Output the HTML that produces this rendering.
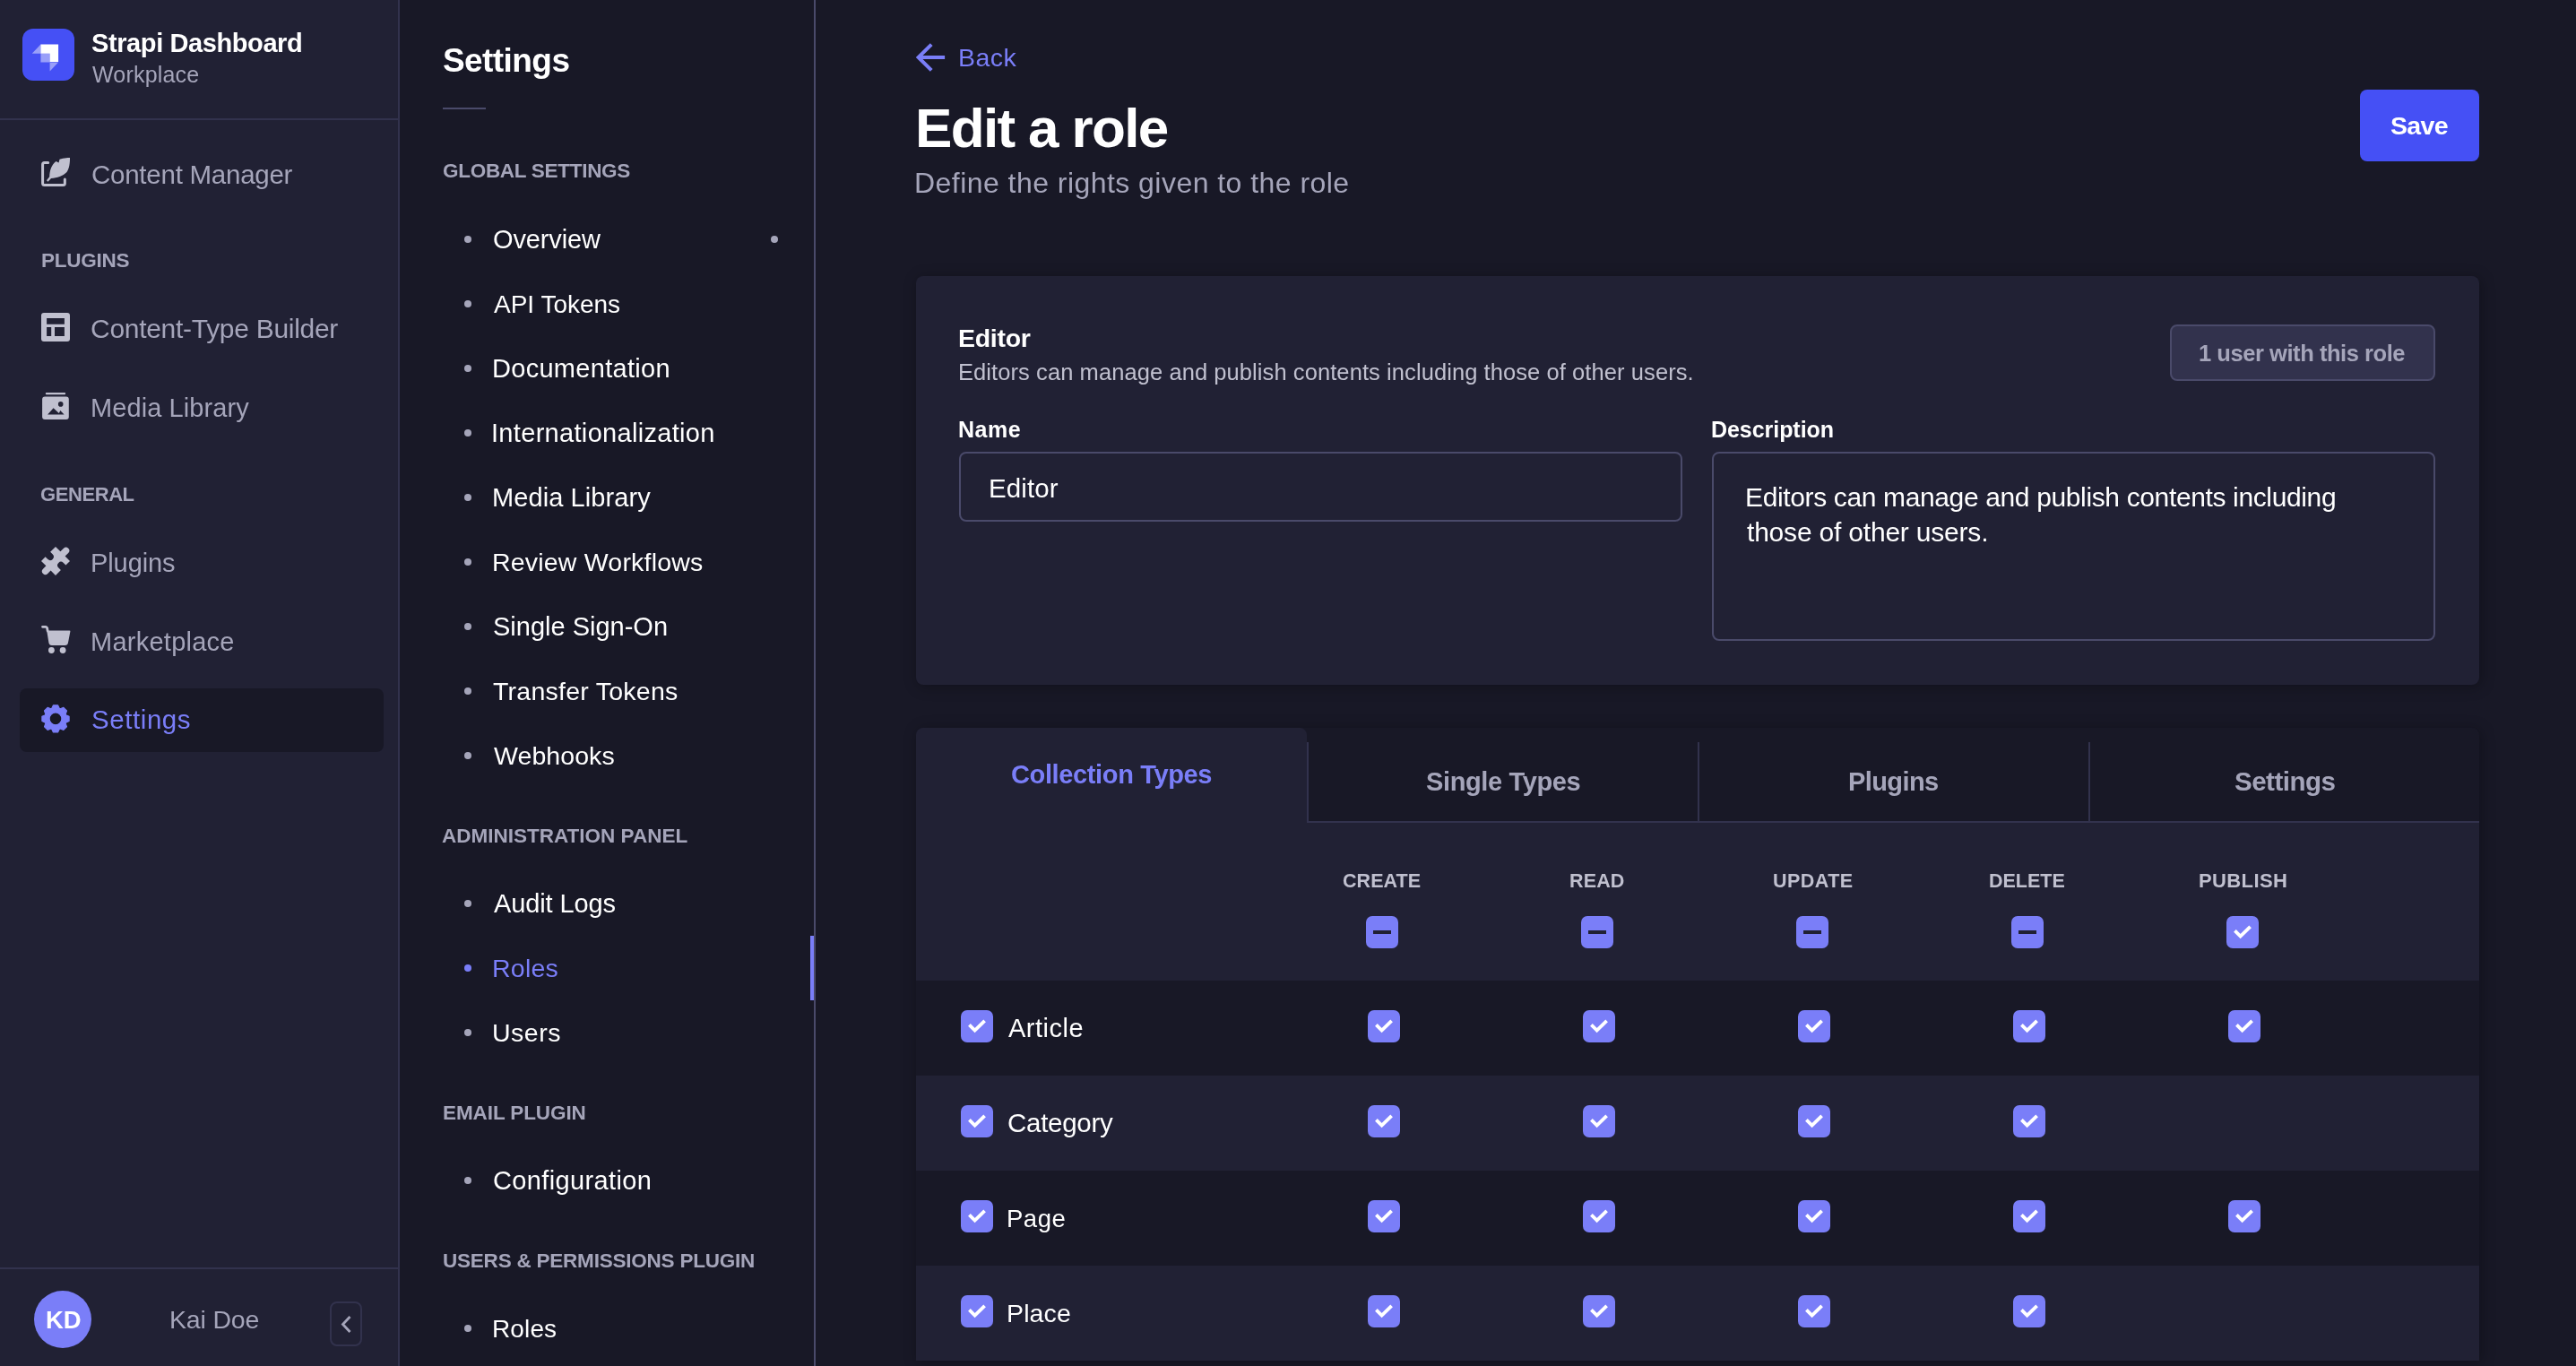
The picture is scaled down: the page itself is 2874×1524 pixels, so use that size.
<!DOCTYPE html>
<html><head><meta charset="utf-8"><title>Edit a role</title>
<style>
html,body{margin:0;padding:0;}
body{width:2874px;height:1524px;overflow:hidden;background:#181826;position:relative;font-family:"Liberation Sans",sans-serif;}
.a{position:absolute;}
@media (max-width:2000px){html{zoom:0.5;}}
.t{position:absolute;white-space:nowrap;font-family:"Liberation Sans",sans-serif;will-change:transform;}
</style></head><body>
<div class="a" style="left:0px;top:0px;width:444px;height:1524px;background:#212134;"></div>
<div class="a" style="left:444px;top:0px;width:2px;height:1524px;background:#32324d;"></div>
<div class="a" style="left:0px;top:132px;width:444px;height:2px;background:#32324d;"></div>
<div class="a" style="left:0px;top:1414px;width:444px;height:2px;background:#32324d;"></div>
<svg class="a" style="left:25px;top:32px" width="58" height="58" viewBox="0 0 58 58">
<rect width="58" height="58" rx="12" fill="#4550f5"/>
<path d="M20.4 17.5H40.1V36.9H30.6V27.7H20.4Z" fill="#fff"/>
<path d="M10.7 27.7L20.4 17.5V27.7Z M20.4 27.7H30.6V37.4H20.4Z M30.6 37.4H40.1L30.6 47.6Z" fill="#fff" fill-opacity="0.45"/>
</svg>
<svg class="a" style="left:38px;top:168px" width="48" height="48" viewBox="0 0 48 48">
<path d="M15.7 13.45H11.6A2 2 0 0 0 9.6 15.45V36.4A2 2 0 0 0 11.6 38.4H32.35A2 2 0 0 0 34.35 36.4V32" fill="none" stroke="#c0c0cf" stroke-width="3" stroke-linecap="round"/>
<path d="M40 8.1C40 8.1 33 8.1 28.5 9.8L27.5 13.6L24.5 12.1C19.5 16 17.5 22 17.2 29.2L14 33.3L15.5 34.8L19 31C26 30.5 32 28.5 36.5 24C40.5 19 40 8.1 40 8.1Z" fill="#c0c0cf"/>
</svg>
<svg class="a" style="left:38px;top:342px" width="48" height="48" viewBox="0 0 48 48">
<path fill-rule="evenodd" fill="#c0c0cf" d="M11 6.9H37A3 3 0 0 1 40 9.9V36A3 3 0 0 1 37 39H11A3 3 0 0 1 8 36V9.9A3 3 0 0 1 11 6.9Z M14.1 13H33.9V19.7H14.1Z M14.1 23H19.2V32.9H14.1Z M23 23H33.9V32.9H23Z"/>
</svg>
<svg class="a" style="left:38px;top:430px" width="48" height="48" viewBox="0 0 48 48">
<rect x="12.8" y="7.9" width="22.3" height="2.3" rx="1" fill="#c0c0cf"/>
<path fill-rule="evenodd" fill="#c0c0cf" d="M12.1 12.6H35.8A3 3 0 0 1 38.8 15.6V34.9A3 3 0 0 1 35.8 37.9H12.1A3 3 0 0 1 9.1 34.9V15.6A3 3 0 0 1 12.1 12.6Z M15.1 32.5L21.6 25.3L27.8 30.9L29.3 28.1L33.6 32.5Z M29.7 20.9m-2.8 0a2.8 2.8 0 1 0 5.6 0a2.8 2.8 0 1 0 -5.6 0Z"/>
</svg>
<svg class="a" style="left:38px;top:602px" width="48" height="48" viewBox="0 0 48 48">
<path fill="#c0c0cf" d="M24 7.9L29.4 13.3L33 9.7A3.6 3.6 0 0 1 38.2 14.9L34.6 18.5L40 23.9L35.4 28.5L32.6 25.7A3.9 3.9 0 0 0 27.1 31.2L29.9 34L24 39.9L18.6 34.5L15.2 37.9A3.6 3.6 0 0 1 10 32.7L13.4 29.3L8 23.9L12.6 19.3L15.4 22.1A3.9 3.9 0 0 0 20.9 16.6L18.1 13.8Z"/>
</svg>
<svg class="a" style="left:38px;top:690px" width="48" height="48" viewBox="0 0 48 48">
<path d="M9.5 9.3H13A1.5 1.5 0 0 1 14.5 10.6L15.2 14" fill="none" stroke="#c0c0cf" stroke-width="2.8" stroke-linecap="round"/>
<path fill="#c0c0cf" d="M14.2 13.4H39.5A1 1 0 0 1 40.4 14.6L38 27A3.5 3.5 0 0 1 34.6 29.9H19.8A3.5 3.5 0 0 1 16.4 27Z"/>
<circle cx="19.4" cy="35.5" r="3.4" fill="#c0c0cf"/><circle cx="32.1" cy="35.5" r="3.4" fill="#c0c0cf"/>
</svg>
<div class="a" style="left:22px;top:768px;width:406px;height:71px;background:#181826;border-radius:8px;"></div>
<svg class="a" style="left:38px;top:778px" width="48" height="48" viewBox="0 0 48 48">
<path fill-rule="evenodd" fill="#7a7ef8" stroke="#7a7ef8" stroke-width="1.2" stroke-linejoin="round" d="M19.79 12.34L21.47 8.81L26.53 8.81L28.21 12.34L29.20 12.75L32.88 11.44L36.46 15.02L35.15 18.70L35.56 19.69L39.09 21.37L39.09 26.43L35.56 28.11L35.15 29.10L36.46 32.78L32.88 36.36L29.20 35.05L28.21 35.46L26.53 38.99L21.47 38.99L19.79 35.46L18.80 35.05L15.12 36.36L11.54 32.78L12.85 29.10L12.44 28.11L8.91 26.43L8.91 21.37L12.44 19.69L12.85 18.70L11.54 15.02L15.12 11.44L18.80 12.75Z M24 17.0A6.9 6.9 0 1 0 24 30.8A6.9 6.9 0 1 0 24 17.0Z"/>
</svg>
<div class="a" style="left:38px;top:1440px;width:64px;height:64px;border-radius:50%;background:#7a7ef8"></div>
<div class="a" style="left:368px;top:1452px;width:36px;height:50px;background:transparent;border:2px solid #32324d;border-radius:8px;box-sizing:border-box;"></div>
<svg class="a" style="left:368px;top:1452px" width="36" height="50" viewBox="0 0 36 50">
<path d="M22.5 17L14.5 25.5L22.5 34" fill="none" stroke="#a5a5ba" stroke-width="2.8"/>
</svg>
<div class="a" style="left:446px;top:0px;width:462px;height:1524px;background:#181826;"></div>
<div class="a" style="left:908px;top:0px;width:2px;height:1524px;background:#4a4a6a;"></div>
<div class="a" style="left:494px;top:120px;width:48px;height:2px;background:#4a4a6a;"></div>
<div class="a" style="left:518px;top:263px;width:8px;height:8px;border-radius:50%;background:#a5a5ba"></div>
<div class="a" style="left:518px;top:335px;width:8px;height:8px;border-radius:50%;background:#a5a5ba"></div>
<div class="a" style="left:518px;top:407px;width:8px;height:8px;border-radius:50%;background:#a5a5ba"></div>
<div class="a" style="left:518px;top:479px;width:8px;height:8px;border-radius:50%;background:#a5a5ba"></div>
<div class="a" style="left:518px;top:551px;width:8px;height:8px;border-radius:50%;background:#a5a5ba"></div>
<div class="a" style="left:518px;top:623px;width:8px;height:8px;border-radius:50%;background:#a5a5ba"></div>
<div class="a" style="left:518px;top:695px;width:8px;height:8px;border-radius:50%;background:#a5a5ba"></div>
<div class="a" style="left:518px;top:767px;width:8px;height:8px;border-radius:50%;background:#a5a5ba"></div>
<div class="a" style="left:518px;top:839px;width:8px;height:8px;border-radius:50%;background:#a5a5ba"></div>
<div class="a" style="left:860px;top:263px;width:8px;height:8px;border-radius:50%;background:#a5a5ba"></div>
<div class="a" style="left:518px;top:1004px;width:8px;height:8px;border-radius:50%;background:#a5a5ba"></div>
<div class="a" style="left:518px;top:1076px;width:8px;height:8px;border-radius:50%;background:#7a7ef8"></div>
<div class="a" style="left:518px;top:1148px;width:8px;height:8px;border-radius:50%;background:#a5a5ba"></div>
<div class="a" style="left:518px;top:1313px;width:8px;height:8px;border-radius:50%;background:#a5a5ba"></div>
<div class="a" style="left:518px;top:1478px;width:8px;height:8px;border-radius:50%;background:#a5a5ba"></div>
<div class="a" style="left:904px;top:1044px;width:4px;height:72px;background:#7a7ef8;"></div>
<svg class="a" style="left:1020px;top:46px" width="36" height="36" viewBox="0 0 36 36">
<path d="M19.2 3.6L4.6 18L19.2 32.4M4.6 18H34.1" fill="none" stroke="#7a7ef8" stroke-width="4"/>
</svg>
<div class="a" style="left:2633px;top:100px;width:133px;height:80px;background:#4550f5;border-radius:8px;"></div>
<div class="a" style="left:1022px;top:308px;width:1744px;height:456px;background:#212134;border-radius:8px;box-shadow:2px 2px 16px rgba(3,3,5,0.3);"></div>
<div class="a" style="left:2421px;top:362px;width:296px;height:63px;background:#32324d;border:2px solid #4a4a6a;border-radius:8px;box-sizing:border-box;"></div>
<div class="a" style="left:1070px;top:504px;width:807px;height:78px;background:transparent;border:2px solid #4a4a6a;border-radius:8px;box-sizing:border-box;"></div>
<div class="a" style="left:1910px;top:504px;width:807px;height:211px;background:transparent;border:2px solid #4a4a6a;border-radius:8px;box-sizing:border-box;"></div>
<div class="a" style="left:1022px;top:812px;width:1744px;height:706px;background:#181826;border-radius:8px 8px 0 0;box-shadow:2px 2px 16px rgba(3,3,5,0.3);"></div>
<div class="a" style="left:1022px;top:812px;width:436px;height:282px;background:#212134;border-radius:8px 8px 0 0;"></div>
<div class="a" style="left:1458px;top:828px;width:2px;height:90px;background:#32324d;"></div>
<div class="a" style="left:1894px;top:828px;width:2px;height:90px;background:#32324d;"></div>
<div class="a" style="left:2330px;top:828px;width:2px;height:90px;background:#32324d;"></div>
<div class="a" style="left:1458px;top:916px;width:1308px;height:2px;background:#32324d;"></div>
<div class="a" style="left:1022px;top:918px;width:1744px;height:176px;background:#212134;"></div>
<svg class="a" style="left:1524px;top:1022px" width="36" height="36" viewBox="0 0 36 36"><rect width="36" height="36" rx="7" fill="#7a7ef8"/><rect x="8" y="16" width="20" height="4" fill="#212134"/></svg>
<svg class="a" style="left:1764px;top:1022px" width="36" height="36" viewBox="0 0 36 36"><rect width="36" height="36" rx="7" fill="#7a7ef8"/><rect x="8" y="16" width="20" height="4" fill="#212134"/></svg>
<svg class="a" style="left:2004px;top:1022px" width="36" height="36" viewBox="0 0 36 36"><rect width="36" height="36" rx="7" fill="#7a7ef8"/><rect x="8" y="16" width="20" height="4" fill="#212134"/></svg>
<svg class="a" style="left:2244px;top:1022px" width="36" height="36" viewBox="0 0 36 36"><rect width="36" height="36" rx="7" fill="#7a7ef8"/><rect x="8" y="16" width="20" height="4" fill="#212134"/></svg>
<svg class="a" style="left:2484px;top:1022px" width="36" height="36" viewBox="0 0 36 36"><rect width="36" height="36" rx="7" fill="#7a7ef8"/><path d="M9.4 16.3L15.6 22.5L26.6 11.8" fill="none" stroke="#fff" stroke-width="3.8"/></svg>
<div class="a" style="left:1022px;top:1094px;width:1744px;height:106px;background:#181826;"></div>
<svg class="a" style="left:1072px;top:1127px" width="36" height="36" viewBox="0 0 36 36"><rect width="36" height="36" rx="7" fill="#7a7ef8"/><path d="M9.4 16.3L15.6 22.5L26.6 11.8" fill="none" stroke="#fff" stroke-width="3.8"/></svg>
<svg class="a" style="left:1526px;top:1127px" width="36" height="36" viewBox="0 0 36 36"><rect width="36" height="36" rx="7" fill="#7a7ef8"/><path d="M9.4 16.3L15.6 22.5L26.6 11.8" fill="none" stroke="#fff" stroke-width="3.8"/></svg>
<svg class="a" style="left:1766px;top:1127px" width="36" height="36" viewBox="0 0 36 36"><rect width="36" height="36" rx="7" fill="#7a7ef8"/><path d="M9.4 16.3L15.6 22.5L26.6 11.8" fill="none" stroke="#fff" stroke-width="3.8"/></svg>
<svg class="a" style="left:2006px;top:1127px" width="36" height="36" viewBox="0 0 36 36"><rect width="36" height="36" rx="7" fill="#7a7ef8"/><path d="M9.4 16.3L15.6 22.5L26.6 11.8" fill="none" stroke="#fff" stroke-width="3.8"/></svg>
<svg class="a" style="left:2246px;top:1127px" width="36" height="36" viewBox="0 0 36 36"><rect width="36" height="36" rx="7" fill="#7a7ef8"/><path d="M9.4 16.3L15.6 22.5L26.6 11.8" fill="none" stroke="#fff" stroke-width="3.8"/></svg>
<svg class="a" style="left:2486px;top:1127px" width="36" height="36" viewBox="0 0 36 36"><rect width="36" height="36" rx="7" fill="#7a7ef8"/><path d="M9.4 16.3L15.6 22.5L26.6 11.8" fill="none" stroke="#fff" stroke-width="3.8"/></svg>
<div class="a" style="left:1022px;top:1200px;width:1744px;height:106px;background:#212134;"></div>
<svg class="a" style="left:1072px;top:1233px" width="36" height="36" viewBox="0 0 36 36"><rect width="36" height="36" rx="7" fill="#7a7ef8"/><path d="M9.4 16.3L15.6 22.5L26.6 11.8" fill="none" stroke="#fff" stroke-width="3.8"/></svg>
<svg class="a" style="left:1526px;top:1233px" width="36" height="36" viewBox="0 0 36 36"><rect width="36" height="36" rx="7" fill="#7a7ef8"/><path d="M9.4 16.3L15.6 22.5L26.6 11.8" fill="none" stroke="#fff" stroke-width="3.8"/></svg>
<svg class="a" style="left:1766px;top:1233px" width="36" height="36" viewBox="0 0 36 36"><rect width="36" height="36" rx="7" fill="#7a7ef8"/><path d="M9.4 16.3L15.6 22.5L26.6 11.8" fill="none" stroke="#fff" stroke-width="3.8"/></svg>
<svg class="a" style="left:2006px;top:1233px" width="36" height="36" viewBox="0 0 36 36"><rect width="36" height="36" rx="7" fill="#7a7ef8"/><path d="M9.4 16.3L15.6 22.5L26.6 11.8" fill="none" stroke="#fff" stroke-width="3.8"/></svg>
<svg class="a" style="left:2246px;top:1233px" width="36" height="36" viewBox="0 0 36 36"><rect width="36" height="36" rx="7" fill="#7a7ef8"/><path d="M9.4 16.3L15.6 22.5L26.6 11.8" fill="none" stroke="#fff" stroke-width="3.8"/></svg>
<div class="a" style="left:1022px;top:1306px;width:1744px;height:106px;background:#181826;"></div>
<svg class="a" style="left:1072px;top:1339px" width="36" height="36" viewBox="0 0 36 36"><rect width="36" height="36" rx="7" fill="#7a7ef8"/><path d="M9.4 16.3L15.6 22.5L26.6 11.8" fill="none" stroke="#fff" stroke-width="3.8"/></svg>
<svg class="a" style="left:1526px;top:1339px" width="36" height="36" viewBox="0 0 36 36"><rect width="36" height="36" rx="7" fill="#7a7ef8"/><path d="M9.4 16.3L15.6 22.5L26.6 11.8" fill="none" stroke="#fff" stroke-width="3.8"/></svg>
<svg class="a" style="left:1766px;top:1339px" width="36" height="36" viewBox="0 0 36 36"><rect width="36" height="36" rx="7" fill="#7a7ef8"/><path d="M9.4 16.3L15.6 22.5L26.6 11.8" fill="none" stroke="#fff" stroke-width="3.8"/></svg>
<svg class="a" style="left:2006px;top:1339px" width="36" height="36" viewBox="0 0 36 36"><rect width="36" height="36" rx="7" fill="#7a7ef8"/><path d="M9.4 16.3L15.6 22.5L26.6 11.8" fill="none" stroke="#fff" stroke-width="3.8"/></svg>
<svg class="a" style="left:2246px;top:1339px" width="36" height="36" viewBox="0 0 36 36"><rect width="36" height="36" rx="7" fill="#7a7ef8"/><path d="M9.4 16.3L15.6 22.5L26.6 11.8" fill="none" stroke="#fff" stroke-width="3.8"/></svg>
<svg class="a" style="left:2486px;top:1339px" width="36" height="36" viewBox="0 0 36 36"><rect width="36" height="36" rx="7" fill="#7a7ef8"/><path d="M9.4 16.3L15.6 22.5L26.6 11.8" fill="none" stroke="#fff" stroke-width="3.8"/></svg>
<div class="a" style="left:1022px;top:1412px;width:1744px;height:106px;background:#212134;"></div>
<svg class="a" style="left:1072px;top:1445px" width="36" height="36" viewBox="0 0 36 36"><rect width="36" height="36" rx="7" fill="#7a7ef8"/><path d="M9.4 16.3L15.6 22.5L26.6 11.8" fill="none" stroke="#fff" stroke-width="3.8"/></svg>
<svg class="a" style="left:1526px;top:1445px" width="36" height="36" viewBox="0 0 36 36"><rect width="36" height="36" rx="7" fill="#7a7ef8"/><path d="M9.4 16.3L15.6 22.5L26.6 11.8" fill="none" stroke="#fff" stroke-width="3.8"/></svg>
<svg class="a" style="left:1766px;top:1445px" width="36" height="36" viewBox="0 0 36 36"><rect width="36" height="36" rx="7" fill="#7a7ef8"/><path d="M9.4 16.3L15.6 22.5L26.6 11.8" fill="none" stroke="#fff" stroke-width="3.8"/></svg>
<svg class="a" style="left:2006px;top:1445px" width="36" height="36" viewBox="0 0 36 36"><rect width="36" height="36" rx="7" fill="#7a7ef8"/><path d="M9.4 16.3L15.6 22.5L26.6 11.8" fill="none" stroke="#fff" stroke-width="3.8"/></svg>
<svg class="a" style="left:2246px;top:1445px" width="36" height="36" viewBox="0 0 36 36"><rect width="36" height="36" rx="7" fill="#7a7ef8"/><path d="M9.4 16.3L15.6 22.5L26.6 11.8" fill="none" stroke="#fff" stroke-width="3.8"/></svg>
<div class="t" id="sd" style="left:101.8px;top:34px;font-size:29px;line-height:29px;font-weight:700;color:#ffffff;letter-spacing:-0.400px;">Strapi Dashboard</div>
<div class="t" id="wp" style="left:102.8px;top:71px;font-size:25px;line-height:25px;font-weight:400;color:#a5a5ba;letter-spacing:0.188px;">Workplace</div>
<div class="t" id="cm" style="left:101.8px;top:180px;font-size:29.5px;line-height:29.5px;font-weight:400;color:#a5a5ba;letter-spacing:-0.250px;">Content Manager</div>
<div class="t" id="plg" style="left:46.2px;top:280px;font-size:22.5px;line-height:22.5px;font-weight:700;color:#a5a5ba;letter-spacing:-0.250px;">PLUGINS</div>
<div class="t" id="ctb" style="left:100.8px;top:352px;font-size:30px;line-height:30px;font-weight:400;color:#a5a5ba;letter-spacing:-0.289px;">Content-Type Builder</div>
<div class="t" id="ml" style="left:100.8px;top:441px;font-size:29px;line-height:29px;font-weight:400;color:#a5a5ba;letter-spacing:0.083px;">Media Library</div>
<div class="t" id="gen" style="left:45.4px;top:541px;font-size:22px;line-height:22px;font-weight:700;color:#a5a5ba;letter-spacing:-0.417px;">GENERAL</div>
<div class="t" id="plgn" style="left:101.4px;top:614px;font-size:29px;line-height:29px;font-weight:400;color:#a5a5ba;letter-spacing:-0.083px;">Plugins</div>
<div class="t" id="mkt" style="left:101.4px;top:702px;font-size:29px;line-height:29px;font-weight:400;color:#a5a5ba;letter-spacing:0.250px;">Marketplace</div>
<div class="t" id="set" style="left:102.4px;top:788px;font-size:29.5px;line-height:29.5px;font-weight:400;color:#7a7ef8;letter-spacing:0.571px;">Settings</div>
<div class="t" id="kd" style="left:51px;top:1459px;font-size:27.5px;line-height:27.5px;font-weight:700;color:#ffffff;">KD</div>
<div class="t" id="kai" style="left:189.4px;top:1458px;font-size:28.5px;line-height:28.5px;font-weight:400;color:#a5a5ba;letter-spacing:-0.167px;">Kai Doe</div>
<div class="t" id="st" style="left:493.9px;top:49px;font-size:37px;line-height:37px;font-weight:700;color:#ffffff;letter-spacing:-0.571px;">Settings</div>
<div class="t" id="gs" style="left:494.0px;top:180px;font-size:22.5px;line-height:22.5px;font-weight:700;color:#a5a5ba;letter-spacing:-0.286px;">GLOBAL SETTINGS</div>
<div class="t" id="ap" style="left:493.4px;top:922px;font-size:22.5px;line-height:22.5px;font-weight:700;color:#a5a5ba;letter-spacing:0.000px;">ADMINISTRATION PANEL</div>
<div class="t" id="ep" style="left:493.9px;top:1231px;font-size:22.5px;line-height:22.5px;font-weight:700;color:#a5a5ba;letter-spacing:-0.091px;">EMAIL PLUGIN</div>
<div class="t" id="up" style="left:493.9px;top:1396px;font-size:22.5px;line-height:22.5px;font-weight:700;color:#a5a5ba;letter-spacing:-0.220px;">USERS &amp; PERMISSIONS PLUGIN</div>
<div class="t" id="back" style="left:1069.3px;top:50px;font-size:28.5px;line-height:28.5px;font-weight:400;color:#7a7ef8;letter-spacing:0.500px;">Back</div>
<div class="t" id="ear" style="left:1021.4px;top:112px;font-size:62px;line-height:62px;font-weight:700;color:#ffffff;letter-spacing:-1.650px;">Edit a role</div>
<div class="t" id="def" style="left:1020.0px;top:188px;font-size:32px;line-height:32px;font-weight:400;color:#a5a5ba;letter-spacing:0.456px;">Define the rights given to the role</div>
<div class="t" id="save" style="left:2667.0px;top:126px;font-size:28.5px;line-height:28.5px;font-weight:700;color:#ffffff;letter-spacing:-0.667px;">Save</div>
<div class="t" id="edh" style="left:1068.8px;top:363px;font-size:28.5px;line-height:28.5px;font-weight:700;color:#ffffff;letter-spacing:-0.300px;">Editor</div>
<div class="t" id="desc" style="left:1069.0px;top:403px;font-size:25.5px;line-height:25.5px;font-weight:400;color:#c0c0cf;letter-spacing:0.079px;">Editors can manage and publish contents including those of other users.</div>
<div class="t" id="badge" style="left:2453.3px;top:382px;font-size:25.5px;line-height:25.5px;font-weight:700;color:#a5a5ba;letter-spacing:-0.450px;">1 user with this role</div>
<div class="t" id="name" style="left:1069.0px;top:467px;font-size:25px;line-height:25px;font-weight:700;color:#ffffff;letter-spacing:0.500px;">Name</div>
<div class="t" id="edin" style="left:1102.6px;top:530px;font-size:29.5px;line-height:29.5px;font-weight:400;color:#ffffff;letter-spacing:0.100px;">Editor</div>
<div class="t" id="dsl" style="left:1909.4px;top:467px;font-size:25px;line-height:25px;font-weight:700;color:#ffffff;letter-spacing:-0.050px;">Description</div>
<div class="t" id="ta1" style="left:1946.7px;top:540px;font-size:30px;line-height:30px;font-weight:400;color:#ffffff;letter-spacing:-0.365px;">Editors can manage and publish contents including</div>
<div class="t" id="ta2" style="left:1948.7px;top:579px;font-size:30px;line-height:30px;font-weight:400;color:#ffffff;letter-spacing:-0.200px;">those of other users.</div>
<div class="t" id="ct" style="left:1127.6px;top:850px;font-size:29px;line-height:29px;font-weight:700;color:#7a7ef8;letter-spacing:-0.367px;">Collection Types</div>
<div class="t" id="sgt" style="left:1590.5px;top:858px;font-size:29px;line-height:29px;font-weight:700;color:#a5a5ba;letter-spacing:-0.364px;">Single Types</div>
<div class="t" id="plt" style="left:2062.0px;top:858px;font-size:29px;line-height:29px;font-weight:700;color:#a5a5ba;letter-spacing:-0.583px;">Plugins</div>
<div class="t" id="stt" style="left:2492.5px;top:857px;font-size:29.5px;line-height:29.5px;font-weight:700;color:#a5a5ba;letter-spacing:-0.500px;">Settings</div>
<div class="t" id="cr" style="left:1498.0px;top:973px;font-size:21.5px;line-height:21.5px;font-weight:700;color:#c0c0cf;letter-spacing:0.060px;">CREATE</div>
<div class="t" id="rd" style="left:1751.0px;top:973px;font-size:21.5px;line-height:21.5px;font-weight:700;color:#c0c0cf;letter-spacing:0.150px;">READ</div>
<div class="t" id="upd" style="left:1977.5px;top:973px;font-size:21.5px;line-height:21.5px;font-weight:700;color:#c0c0cf;letter-spacing:0.460px;">UPDATE</div>
<div class="t" id="del" style="left:2219.25px;top:973px;font-size:21.5px;line-height:21.5px;font-weight:700;color:#c0c0cf;">DELETE</div>
<div class="t" id="pub" style="left:2452.5px;top:972px;font-size:22px;line-height:22px;font-weight:700;color:#c0c0cf;letter-spacing:0.375px;">PUBLISH</div>
<div class="t" id="art" style="left:1125.0px;top:1133px;font-size:29px;line-height:29px;font-weight:400;color:#ffffff;letter-spacing:0.500px;">Article</div>
<div class="t" id="cat" style="left:1124.0px;top:1238px;font-size:29.5px;line-height:29.5px;font-weight:400;color:#ffffff;letter-spacing:-0.286px;">Category</div>
<div class="t" id="pag" style="left:1123.0px;top:1346px;font-size:27.5px;line-height:27.5px;font-weight:400;color:#ffffff;letter-spacing:0.500px;">Page</div>
<div class="t" id="plc" style="left:1123.0px;top:1451px;font-size:28.5px;line-height:28.5px;font-weight:400;color:#ffffff;letter-spacing:0.125px;">Place</div>
<div class="t" id="it0" style="left:549.8px;top:253px;font-size:29px;line-height:29px;font-weight:400;color:#ffffff;letter-spacing:-0.143px;">Overview</div>
<div class="t" id="it1" style="left:550.8px;top:326px;font-size:28px;line-height:28px;font-weight:400;color:#ffffff;letter-spacing:0.000px;">API Tokens</div>
<div class="t" id="it2" style="left:548.8px;top:397px;font-size:29px;line-height:29px;font-weight:400;color:#ffffff;letter-spacing:0.292px;">Documentation</div>
<div class="t" id="it3" style="left:547.8px;top:469px;font-size:29px;line-height:29px;font-weight:400;color:#ffffff;letter-spacing:0.316px;">Internationalization</div>
<div class="t" id="it4" style="left:548.8px;top:541px;font-size:29px;line-height:29px;font-weight:400;color:#ffffff;letter-spacing:0.083px;">Media Library</div>
<div class="t" id="it5" style="left:548.8px;top:613px;font-size:28.5px;line-height:28.5px;font-weight:400;color:#ffffff;letter-spacing:0.200px;">Review Workflows</div>
<div class="t" id="it6" style="left:549.8px;top:685px;font-size:29px;line-height:29px;font-weight:400;color:#ffffff;letter-spacing:0.000px;">Single Sign-On</div>
<div class="t" id="it7" style="left:549.8px;top:757px;font-size:28.5px;line-height:28.5px;font-weight:400;color:#ffffff;letter-spacing:0.250px;">Transfer Tokens</div>
<div class="t" id="it8" style="left:550.8px;top:829px;font-size:28.5px;line-height:28.5px;font-weight:400;color:#ffffff;letter-spacing:0.071px;">Webhooks</div>
<div class="t" id="al" style="left:550.8px;top:994px;font-size:29px;line-height:29px;font-weight:400;color:#ffffff;letter-spacing:-0.111px;">Audit Logs</div>
<div class="t" id="rl" style="left:548.8px;top:1066px;font-size:28.5px;line-height:28.5px;font-weight:400;color:#7a7ef8;letter-spacing:0.250px;">Roles</div>
<div class="t" id="us" style="left:548.8px;top:1138px;font-size:28.5px;line-height:28.5px;font-weight:400;color:#ffffff;letter-spacing:0.500px;">Users</div>
<div class="t" id="cf" style="left:549.8px;top:1303px;font-size:29px;line-height:29px;font-weight:400;color:#ffffff;letter-spacing:0.375px;">Configuration</div>
<div class="t" id="rl2" style="left:548.8px;top:1469px;font-size:28px;line-height:28px;font-weight:400;color:#ffffff;letter-spacing:0.125px;">Roles</div>
</body></html>
